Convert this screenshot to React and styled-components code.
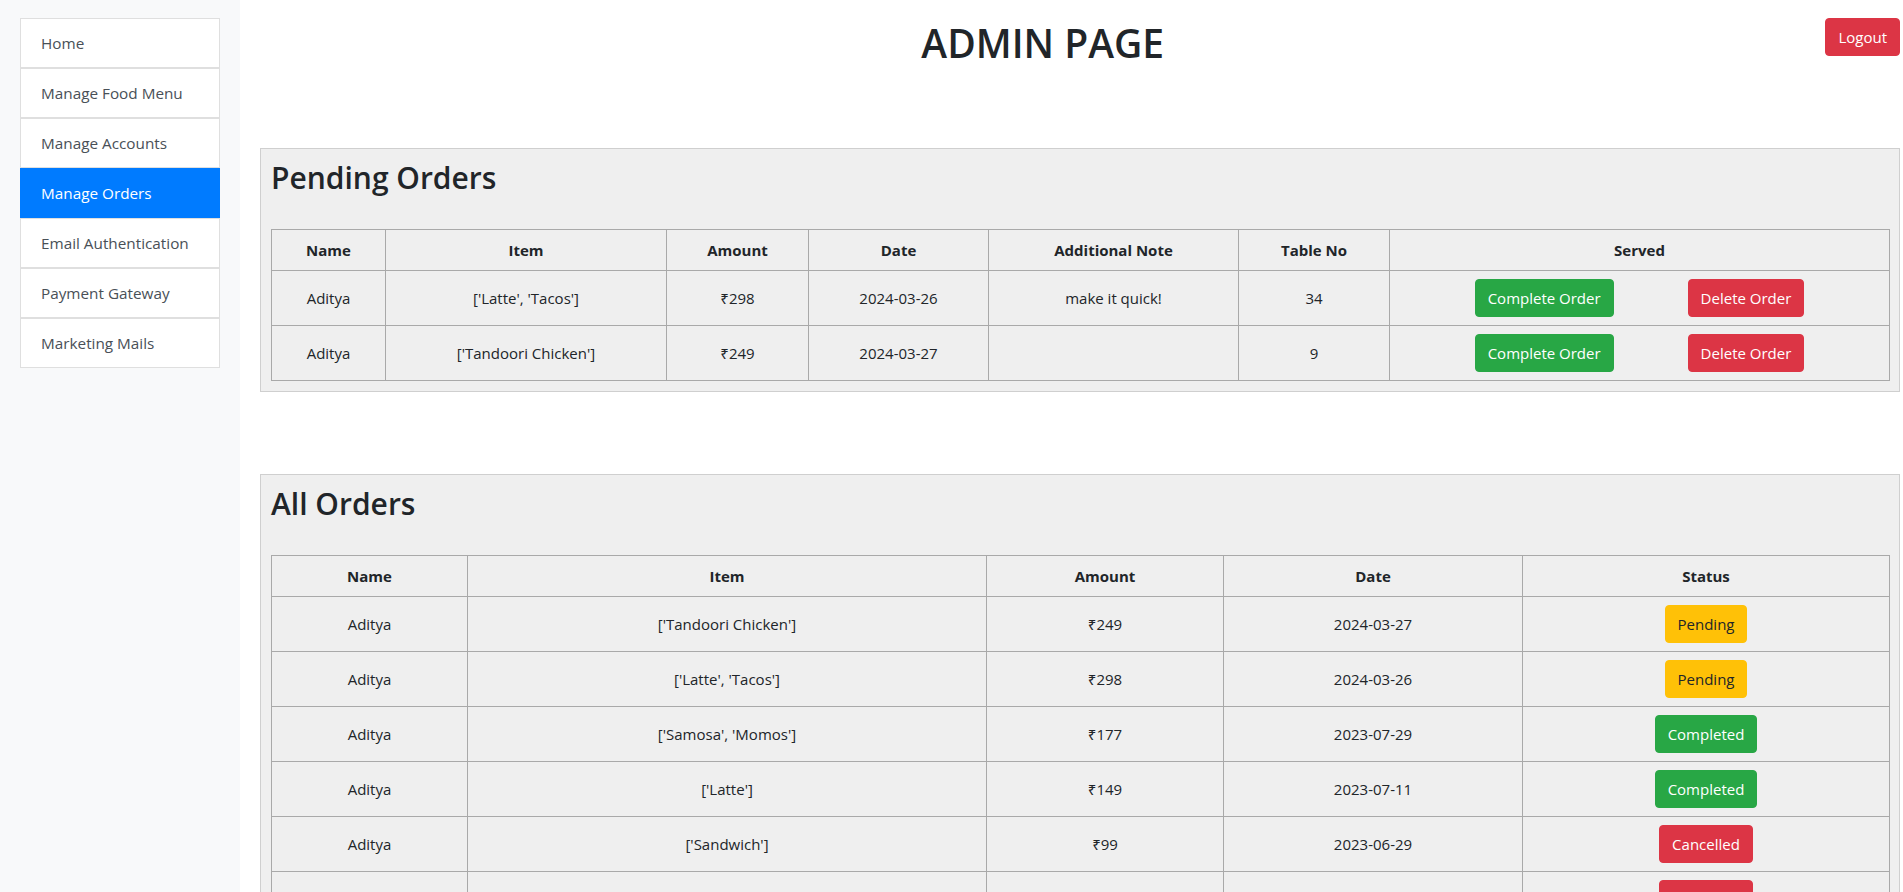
import React from 'react'
import styled, { createGlobalStyle } from 'styled-components'

const GlobalStyle = createGlobalStyle`
  body {
    margin: 0;
    font-family: "Open Sans", "Noto Sans", sans-serif;
    font-size: 15px;
    line-height: 1.5;
    color: #212529;
    background: #fff;
  }
  * { box-sizing: border-box; }
`

const COLORS = {
  success: { bg: '#28a745', fg: '#fff' },
  danger: { bg: '#dc3545', fg: '#fff' },
  warning: { bg: '#ffc107', fg: '#212529' }
}

const Layout = styled.div`
  display: flex;
  min-height: 100vh;
`

const Sidebar = styled.aside`
  width: 240px;
  flex-shrink: 0;
  background: #f8f9fa;
  padding: 18px 20px;
`

const NavList = styled.ul`
  list-style: none;
  margin: 0;
  padding: 0;
  display: flex;
  flex-direction: column;
`

const NavItem = styled.li`
  height: 50px;
  padding: 12px 20px;
  line-height: 25px;
  font-size: 15.3px;
  border: 1px solid ${(p) => (p.$active ? '#007bff' : '#dfdfdf')};
  background: ${(p) => (p.$active ? '#007bff' : '#fff')};
  color: ${(p) => (p.$active ? '#fff' : '#495057')};
  cursor: pointer;
`

const Main = styled.main`
  flex: 1;
  min-width: 0;
  padding: 18px 3px 0 20px;
`

const TopBar = styled.div`
  display: flex;
  align-items: flex-start;
`

const Title = styled.h1`
  flex: 1;
  margin: 0;
  text-align: center;
  font-size: 39px;
  font-weight: 600;
  line-height: 50px;
`

const Button = styled.button`
  font-family: inherit;
  font-size: 15px;
  line-height: 24px;
  padding: 6px 12px;
  border-radius: 4px;
  border: 1px solid ${(p) => COLORS[p.$variant].bg};
  background: ${(p) => COLORS[p.$variant].bg};
  color: ${(p) => COLORS[p.$variant].fg};
  cursor: pointer;
`

const Section = styled.section`
  margin-top: ${(p) => p.$offset}px;
  background: #efefef;
  border: 1px solid #cfcfcf;
  padding: 10px;
`

const SectionTitle = styled.h2`
  margin: 0 0 32px;
  font-size: 30px;
  font-weight: 600;
  line-height: 38px;
`

const Table = styled.table`
  width: 100%;
  border-collapse: collapse;
  table-layout: fixed;
`

const Th = styled.th`
  width: ${(p) => p.$width}px;
  border: 1px solid #a9a9a9;
  padding: 8px;
  font-size: 15px;
  font-weight: 700;
  line-height: 24px;
  text-align: center;
`

const Td = styled.td`
  border: 1px solid #a9a9a9;
  padding: 8px;
  font-size: 15px;
  line-height: 24px;
  height: 55px;
  text-align: center;
  vertical-align: middle;
`

const ActionGroup = styled.div`
  display: flex;
  justify-content: center;
  gap: 74px;
`

const navLinks = [
  'Home',
  'Manage Food Menu',
  'Manage Accounts',
  'Manage Orders',
  'Email Authentication',
  'Payment Gateway',
  'Marketing Mails'
]

const pendingCols = [
  ['Name', 114],
  ['Item', 281],
  ['Amount', 142],
  ['Date', 180],
  ['Additional Note', 250],
  ['Table No', 151],
  ['Served', 500]
]

const pendingOrders = [
  { name: 'Aditya', item: "['Latte', 'Tacos']", amount: 298, date: '2024-03-26', note: 'make it quick!', table: 34 },
  { name: 'Aditya', item: "['Tandoori Chicken']", amount: 249, date: '2024-03-27', note: '', table: 9 }
]

const allCols = [
  ['Name', 196],
  ['Item', 519],
  ['Amount', 237],
  ['Date', 299],
  ['Status', 367]
]

const allOrders = [
  { name: 'Aditya', item: "['Tandoori Chicken']", amount: 249, date: '2024-03-27', status: 'Pending' },
  { name: 'Aditya', item: "['Latte', 'Tacos']", amount: 298, date: '2024-03-26', status: 'Pending' },
  { name: 'Aditya', item: "['Samosa', 'Momos']", amount: 177, date: '2023-07-29', status: 'Completed' },
  { name: 'Aditya', item: "['Latte']", amount: 149, date: '2023-07-11', status: 'Completed' },
  { name: 'Aditya', item: "['Sandwich']", amount: 99, date: '2023-06-29', status: 'Cancelled' },
  { name: 'Aditya', item: "['Pizza']", amount: 199, date: '2023-06-20', status: 'Cancelled' }
]

const statusVariant = {
  Pending: 'warning',
  Completed: 'success',
  Cancelled: 'danger'
}

const TableHead = ({ cols }) => (
  <thead>
    <tr>
      {cols.map(([label, width]) => (
        <Th key={label} $width={width}>
          {label}
        </Th>
      ))}
    </tr>
  </thead>
)

export default function App () {
  return (
    <Layout>
      <GlobalStyle />

      {/* sidebar */}
      <Sidebar>
        <NavList>
          {navLinks.map((link) => (
            <NavItem key={link} $active={link === 'Manage Orders'}>
              {link}
            </NavItem>
          ))}
        </NavList>
      </Sidebar>

      <Main>
        <TopBar>
          <Title>ADMIN PAGE</Title>
          <Button $variant="danger">Logout</Button>
        </TopBar>

        {/* pending */}
        <Section $offset={80}>
          <SectionTitle>Pending Orders</SectionTitle>
          <Table>
            <TableHead cols={pendingCols} />
            <tbody>
              {pendingOrders.map((o, idx) => (
                <tr key={idx}>
                  <Td>{o.name}</Td>
                  <Td>{o.item}</Td>
                  <Td>₹{o.amount}</Td>
                  <Td>{o.date}</Td>
                  <Td>{o.note}</Td>
                  <Td>{o.table}</Td>
                  <Td>
                    <ActionGroup>
                      <Button $variant="success">Complete Order</Button>
                      <Button $variant="danger">Delete Order</Button>
                    </ActionGroup>
                  </Td>
                </tr>
              ))}
            </tbody>
          </Table>
        </Section>

        {/* all orders */}
        <Section $offset={82}>
          <SectionTitle>All Orders</SectionTitle>
          <Table>
            <TableHead cols={allCols} />
            <tbody>
              {allOrders.map((o, idx) => (
                <tr key={idx}>
                  <Td>{o.name}</Td>
                  <Td>{o.item}</Td>
                  <Td>₹{o.amount}</Td>
                  <Td>{o.date}</Td>
                  <Td>
                    <Button $variant={statusVariant[o.status]}>{o.status}</Button>
                  </Td>
                </tr>
              ))}
            </tbody>
          </Table>
        </Section>
      </Main>
    </Layout>
  )
}
